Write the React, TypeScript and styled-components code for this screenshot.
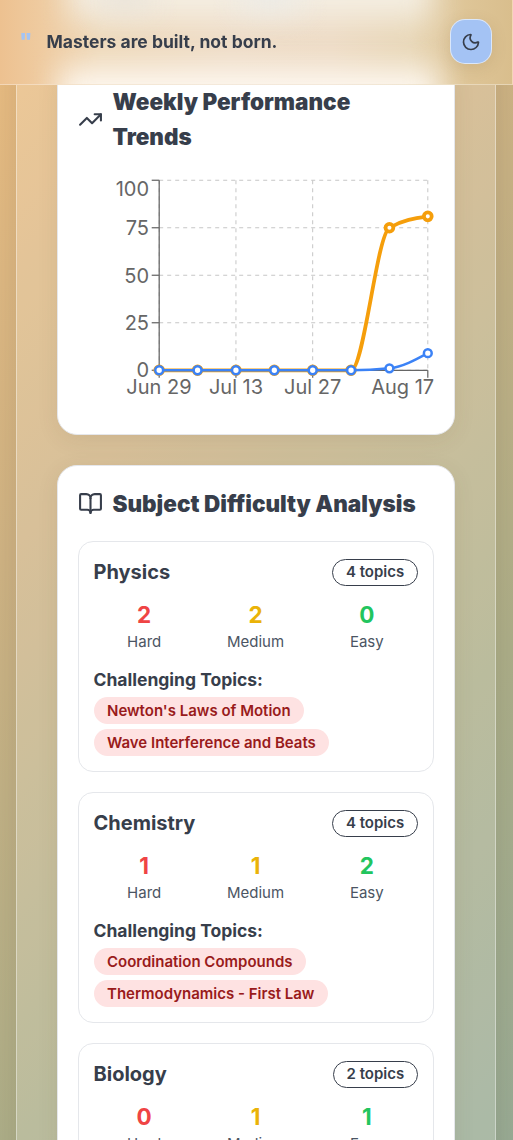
import React from "react";
import styled, { createGlobalStyle } from "styled-components";
import { BookOpen, Moon, TrendingUp } from "lucide-react";

const GlobalStyle = createGlobalStyle`
  *, *::before, *::after { box-sizing: border-box; }
  html, body { margin: 0; padding: 0; }
  body {
    font-family: Inter, "Liberation Sans", sans-serif;
    color: #373e4b;
    overflow: hidden;
  }
  h2, h3, p { margin: 0; }
`;

const Page = styled.div`
  height: 1140px;
  overflow: hidden;
  padding: 0 17px 0 16px;
  background: linear-gradient(135deg, #edbe83 0%, #d0b485 34%, #adaf8a 70%, #99ac96 100%);
`;

const Header = styled.header`
  position: fixed;
  top: 0;
  left: 0;
  right: 0;
  z-index: 10;
  height: 85px;
  padding: 0 20px 1px;
  display: flex;
  align-items: center;
  justify-content: space-between;
  overflow: hidden;
  border: solid rgba(255, 255, 255, 0.35);
  border-width: 0 1px 1px 0;
  background: linear-gradient(
    90deg,
    #edc190 0%,
    #efcba0 8%,
    #efdabc 20%,
    #efddc8 45%,
    #eedcc6 65%,
    #e9d8b9 80%,
    #dec597 91%,
    #d9be8d 100%
  );
`;

const Glow = styled.span<{ $left: number; $width: number; $top: number; $height: number; $color: string }>`
  position: absolute;
  left: ${(p) => p.$left}px;
  top: ${(p) => p.$top}px;
  width: ${(p) => p.$width}px;
  height: ${(p) => p.$height}px;
  background: ${(p) => p.$color};
  filter: blur(15px);
`;

const Quote = styled.div`
  position: relative;
  display: flex;
  align-items: center;
  gap: 15px;
  font-size: 17.5px;
  line-height: 25px;
  font-weight: 700;
`;

const QuoteMark = styled.span`
  width: 12.2px;
  margin-left: -0.7px;
  font-size: 21px;
  line-height: 25px;
  font-weight: 900;
  color: #a5c4f3;
`;

const ThemeButton = styled.button`
  position: relative;
  width: 42px;
  height: 45px;
  padding: 0;
  display: flex;
  align-items: center;
  justify-content: center;
  color: #373e4b;
  border: 1px solid rgba(255, 255, 255, 0.6);
  border-radius: 15px;
  background: #a4c3f4;
  box-shadow: 0 4px 15px rgba(120, 90, 40, 0.15);
`;

const Panel = styled.main`
  min-height: 1140px;
  padding: 63px 40px 0;
  display: flex;
  flex-direction: column;
  gap: 30px;
  border: solid rgba(255, 255, 255, 0.4);
  border-width: 0 1px;
  background: rgba(255, 255, 255, 0.17);
  box-shadow: 0 8px 32px rgba(70, 50, 20, 0.15);
`;

const Card = styled.section`
  padding: 20px;
  border: 1px solid #e5e7eb;
  border-radius: 20px;
  background: #fff;
  box-shadow: 0 5px 22px rgba(90, 70, 30, 0.09);
`;

const CardTitle = styled.h2`
  margin-bottom: 20px;
  display: flex;
  align-items: center;
  gap: 9.5px;
  font-size: 22.5px;
  line-height: 35px;
  font-weight: 900;

  svg { flex: none; }
`;

const Chart = styled.svg`
  display: block;
  width: 356px;
  height: 240px;
  overflow: visible;
  font-size: 20px;
  fill: #666;
`;

const SubjectList = styled.div`
  display: flex;
  flex-direction: column;
  gap: 20px;
`;

const Subject = styled.article`
  padding: 15px 15px 15px 14.5px;
  border: 1px solid #e5e7eb;
  border-radius: 15px;
`;

const SubjectHead = styled.div`
  height: 30px;
  margin-bottom: 10px;
  display: flex;
  align-items: center;
  justify-content: space-between;
`;

const SubjectName = styled.h3`
  font-size: 20px;
  line-height: 30px;
  font-weight: 700;
`;

const Badge = styled.span<{ $tone?: "outline" | "danger" }>`
  padding: 2.5px ${(p) => (p.$tone === "danger" ? "12.5px" : "12.8px")};
  border: 1px solid ${(p) => (p.$tone === "danger" ? "transparent" : "#373e4b")};
  border-radius: 14px;
  font-size: 15px;
  line-height: 20px;
  font-weight: 600;
  color: ${(p) => (p.$tone === "danger" ? "#991b1b" : "#373e4b")};
  background: ${(p) => (p.$tone === "danger" ? "#fee2e2" : "transparent")};
`;

const Stats = styled.div`
  margin: 0 0.5px 15px 0;
  display: grid;
  grid-template-columns: repeat(3, 1fr);
  gap: 10px;
  text-align: center;
`;

const Count = styled.div<{ $color: string }>`
  font-size: 22.5px;
  line-height: 35px;
  font-weight: 700;
  color: ${(p) => p.$color};
`;

const Level = styled.div`
  font-size: 15px;
  line-height: 20px;
  color: #4b5563;
`;

const TopicsLabel = styled.p`
  margin-bottom: 5px;
  font-size: 17.5px;
  line-height: 25px;
  font-weight: 700;
`;

const Topics = styled.div`
  display: flex;
  flex-wrap: wrap;
  gap: 5px;
`;

const PLOT = { left: 81.2, right: 349.8, top: 6.25, bottom: 196.25 };
const score = [0, 0, 0, 0, 0, 0, 75, 81];
const hours = [0, 0, 0, 0, 0, 0, 1, 9];
const step = (PLOT.right - PLOT.left) / (score.length - 1);
const px = (i: number) => PLOT.left + i * step;
const py = (v: number) => PLOT.bottom - (v / 100) * (PLOT.bottom - PLOT.top);

function monotonePath(values: number[]) {
  const n = values.length;
  const slope = values.slice(1).map((v, i) => v - values[i]);
  const tangent = values.map((_, i) => {
    if (i === 0 || i === n - 1) return 0;
    const a = slope[i - 1];
    const b = slope[i];
    return (Math.sign(a) + Math.sign(b)) * Math.min(Math.abs(a), Math.abs(b), Math.abs(a + b) / 4);
  });
  tangent[0] = (3 * slope[0] - tangent[1]) / 2;
  tangent[n - 1] = (3 * slope[n - 2] - tangent[n - 2]) / 2;
  let d = `M${px(0)},${py(values[0])}`;
  for (let i = 1; i < n; i++) {
    d += `C${px(i - 1 + 1 / 3)},${py(values[i - 1] + tangent[i - 1] / 3)},${px(i - 1 / 3)},${py(
      values[i] - tangent[i] / 3
    )},${px(i)},${py(values[i])}`;
  }
  return d;
}

const yTicks = [
  { v: 0, label: 203 },
  { v: 25, label: 156 },
  { v: 50, label: 108.5 },
  { v: 75, label: 61 },
  { v: 100, label: 22 },
];
const xTicks = [
  { i: 0, text: "Jun 29", x: 81 },
  { i: 2, text: "Jul 13", x: 158 },
  { i: 4, text: "Jul 27", x: 234.7 },
  { i: 7, text: "Aug 17", x: 324.7 },
];

function Series({ values, color, width }: { values: number[]; color: string; width: number }) {
  return (
    <g stroke={color} strokeWidth={width}>
      <path d={monotonePath(values)} fill="none" />
      {values.map((v, i) => (
        <circle key={i} cx={px(i)} cy={py(v)} r={3.9} fill="#fff" />
      ))}
    </g>
  );
}

function TrendChart() {
  return (
    <Chart viewBox="0 0 356 240">
      <g stroke="#c6c6c6" strokeDasharray="4 4">
        {yTicks.map(({ v }) => (
          <line key={v} x1={PLOT.left} x2={PLOT.right} y1={py(v)} y2={py(v)} />
        ))}
        {xTicks.map(({ i }) => (
          <line key={i} x1={px(i)} x2={px(i)} y1={PLOT.top} y2={PLOT.bottom} />
        ))}
      </g>
      <g stroke="#666" strokeWidth={1.25}>
        <line x1={PLOT.left} x2={PLOT.left} y1={PLOT.top} y2={PLOT.bottom} />
        <line x1={PLOT.left} x2={PLOT.right} y1={PLOT.bottom} y2={PLOT.bottom} />
        {yTicks.map(({ v }) => (
          <line key={v} x1={PLOT.left - 7.5} x2={PLOT.left} y1={py(v)} y2={py(v)} />
        ))}
        {xTicks.map(({ i }) => (
          <line key={i} x1={px(i)} x2={px(i)} y1={PLOT.bottom} y2={PLOT.bottom + 7.5} />
        ))}
      </g>
      {yTicks.map(({ v, label }) => (
        <text key={v} x={71} y={label} textAnchor="end">{v}</text>
      ))}
      {xTicks.map(({ i, text, x }) => (
        <text key={i} x={x} y={219.5} textAnchor="middle">{text}</text>
      ))}
      <Series values={score} color="#f59e0b" width={3.75} />
      <Series values={hours} color="#3b82f6" width={2.5} />
    </Chart>
  );
}

const subjects = [
  { name: "Physics", total: 4, counts: [2, 2, 0], topics: ["Newton's Laws of Motion", "Wave Interference and Beats"] },
  { name: "Chemistry", total: 4, counts: [1, 1, 2], topics: ["Coordination Compounds", "Thermodynamics - First Law"] },
  { name: "Biology", total: 2, counts: [0, 1, 1], topics: [] as string[] },
];
const levels = [
  { name: "Hard", color: "#ef4444" },
  { name: "Medium", color: "#eab308" },
  { name: "Easy", color: "#22c55e" },
];

export default function App() {
  return (
    <>
      <GlobalStyle />
      <Header>
        <Glow $left={70} $width={360} $top={-44} $height={62} $color="#f4eee2" />
        <Glow $left={100} $width={50} $top={-24} $height={34} $color="#e9e3d9" />
        <Glow $left={240} $width={60} $top={-24} $height={34} $color="#ecebe7" />
        <Glow $left={60} $width={378} $top={69} $height={60} $color="#fdf7ef" />
        <Quote>
          <QuoteMark>"</QuoteMark>
          <span>Masters are built, not born.</span>
        </Quote>
        <ThemeButton aria-label="Toggle theme">
          <Moon size={20} strokeWidth={2} />
        </ThemeButton>
      </Header>
      <Page>
        <Panel>
          <Card>
            <CardTitle>
              <TrendingUp size={25} />
              <span>Weekly Performance Trends</span>
            </CardTitle>
            <TrendChart />
          </Card>
          <Card>
            <CardTitle>
              <BookOpen size={25} />
              <span>Subject Difficulty Analysis</span>
            </CardTitle>
            <SubjectList>
              {subjects.map((s) => (
                <Subject key={s.name}>
                  <SubjectHead>
                    <SubjectName>{s.name}</SubjectName>
                    <Badge>{s.total} topics</Badge>
                  </SubjectHead>
                  <Stats>
                    {levels.map((l, i) => (
                      <div key={l.name}>
                        <Count $color={l.color}>{s.counts[i]}</Count>
                        <Level>{l.name}</Level>
                      </div>
                    ))}
                  </Stats>
                  {s.topics.length > 0 && (
                    <>
                      <TopicsLabel>Challenging Topics:</TopicsLabel>
                      <Topics>
                        {s.topics.map((t) => (
                          <Badge key={t} $tone="danger">{t}</Badge>
                        ))}
                      </Topics>
                    </>
                  )}
                </Subject>
              ))}
            </SubjectList>
          </Card>
        </Panel>
      </Page>
    </>
  );
}
